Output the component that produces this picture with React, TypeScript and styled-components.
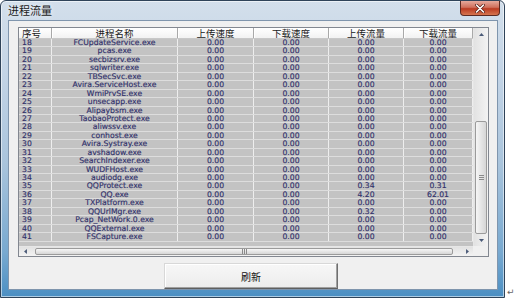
import React from 'react';
import styled, { createGlobalStyle } from 'styled-components';

const GlobalStyle = createGlobalStyle`
  html, body { margin: 0; padding: 0; background: #fff; }
  body { font-family: "DejaVu Sans", Verdana, sans-serif; }
`;

const CJK = `"Noto Sans CJK SC", "DejaVu Sans", sans-serif`;
const COLS = '33px 126px 76px 75px 75px 69px';

const Page = styled.div`
  display: flex;
  align-items: flex-end;
  width: 518px;
  height: 298px;
`;

const Window = styled.div`
  box-sizing: border-box;
  width: 505px;
  height: 298px;
  display: flex;
  flex-direction: column;
  padding: 0 6px 7px 7px;
  border: 1px solid #2f4359;
  border-radius: 6px 6px 0 0;
  background: linear-gradient(180deg, #d3dfeb 0%, #c3d4e6 25%, #a9c4dc 55%, #78a9d0 85%, #4b8fc3 100%);
  box-shadow: inset 0 0 0 1px rgba(255, 255, 255, 0.55);
`;

const TitleBar = styled.div`
  height: 19px;
  display: flex;
  align-items: flex-start;
  justify-content: space-between;
`;

const Title = styled.span`
  font-family: ${CJK};
  font-size: 11px;
  line-height: 19px;
  color: #1a1a1a;
  text-shadow: 0 0 5px rgba(255, 255, 255, 0.95);
`;

const CloseButton = styled.div`
  box-sizing: border-box;
  width: 40px;
  height: 15px;
  margin-right: -2px;
  display: flex;
  align-items: center;
  justify-content: center;
  border: 1px solid #5c2a22;
  border-top: none;
  border-radius: 0 0 4px 4px;
  background: linear-gradient(180deg, #e6a99c 0%, #d0705c 45%, #bb3b22 55%, #d5754f 100%);
`;

const Client = styled.div`
  flex: 1;
  display: flex;
  flex-direction: column;
  align-items: flex-start;
  padding: 6px 0 0 9px;
  background: #f0f0f0;
  border: 1px solid #7f95ad;
`;

const ListView = styled.div`
  box-sizing: border-box;
  width: 471px;
  height: 230px;
  display: grid;
  grid-template-columns: 454px 15px;
  grid-template-rows: 218px 10px;
  border: 1px solid #828790;
  background: #fff;
`;

const Viewport = styled.div`
  display: flex;
  flex-direction: column;
  background: #fff;
`;

const HeaderRow = styled.div`
  box-sizing: border-box;
  display: grid;
  grid-template-columns: ${COLS};
  flex: none;
  height: 11px;
  background: linear-gradient(180deg, #ffffff, #f2f2f2);
  border-bottom: 1px solid #c8c8c8;
`;

const HeaderCell = styled.div<{ $align: string }>`
  font-family: ${CJK};
  font-size: 9.5px;
  line-height: 10px;
  color: #202020;
  text-align: ${p => p.$align};
  padding-left: ${p => (p.$align === 'left' ? '3px' : '0')};
  border-right: 1px solid #a9a9a9;
  box-shadow: 1px 0 0 #fff;
  white-space: nowrap;
`;

const DataRow = styled.div`
  box-sizing: border-box;
  display: grid;
  grid-template-columns: ${COLS};
  flex: none;
  height: 8.45px;
  background: #c3c3c3;
  border-bottom: 1px solid #dddddd;
`;

const Filler = styled.div`
  flex: 1;
  background: #c3c3c3;
`;

const Cell = styled.div<{ $align: string }>`
  font-size: 7.7px;
  line-height: 7.45px;
  color: #30306a;
  -webkit-text-stroke: 0.15px #30306a;
  text-align: ${p => p.$align};
  padding-left: ${p => (p.$align === 'left' ? '3px' : '0')};
  border-right: 1px solid #eeeeee;
  white-space: nowrap;
`;

const VScroll = styled.div`
  display: flex;
  flex-direction: column;
  background: linear-gradient(90deg, #e2e2e2, #f3f3f3);
  border-left: 1px solid #e6e6e6;
`;

const HScroll = styled.div`
  display: flex;
  background: linear-gradient(180deg, #e2e2e2, #f3f3f3);
  border-top: 1px solid #e6e6e6;
`;

const ArrowButton = styled.div<{ $vertical?: boolean }>`
  flex: none;
  ${p => (p.$vertical ? 'height: 12px;' : 'width: 12px;')}
  display: flex;
  align-items: center;
  justify-content: center;
`;

const Track = styled.div<{ $vertical?: boolean }>`
  flex: 1;
  display: flex;
  flex-direction: ${p => (p.$vertical ? 'column' : 'row')};
`;

const Thumb = styled.div<{ $vertical?: boolean; $start: number; $length: number }>`
  box-sizing: border-box;
  display: flex;
  align-items: center;
  justify-content: center;
  gap: 1px;
  flex-direction: ${p => (p.$vertical ? 'column' : 'row')};
  ${p =>
    p.$vertical
      ? `margin: ${p.$start}px 1px 0; height: ${p.$length}px;`
      : `margin: 1px 0 1px ${p.$start}px; width: ${p.$length}px;`}
  border: 1px solid #9b9b9b;
  border-radius: 2px;
  background: ${p =>
    p.$vertical
      ? 'linear-gradient(90deg, #f6f6f6, #e4e4e4 55%, #d6d6d6)'
      : 'linear-gradient(180deg, #f6f6f6, #e4e4e4 55%, #d6d6d6)'};
`;

const Grip = styled.span<{ $vertical?: boolean }>`
  display: block;
  background: #8a8a8a;
  ${p => (p.$vertical ? 'width: 5px; height: 1px;' : 'width: 1px; height: 5px;')}
`;

const Corner = styled.div`
  background: #f0f0f0;
`;

const RefreshButton = styled.button`
  box-sizing: border-box;
  width: 174px;
  height: 26px;
  margin: 6px 0 0 146px;
  padding: 0;
  font-family: ${CJK};
  font-size: 10px;
  color: #111;
  background: linear-gradient(180deg, #f7f7f7, #ececec);
  border: 1px solid;
  border-color: #d8d8d8 #6f6f6f #5f5f5f #d8d8d8;
  box-shadow: inset -1px -1px 0 #a0a0a0, inset 1px 1px 0 #fff;
`;

const Mark = styled.span`
  font-size: 9px;
  line-height: 10px;
  color: #666;
  margin: 0 0 1px 2px;
`;

type Dir = 'up' | 'down' | 'left' | 'right';

const Arrow = ({ dir }: { dir: Dir }) => {
  const pts: Record<Dir, string> = {
    up: '0,4 3.5,0 7,4',
    down: '0,0 3.5,4 7,0',
    left: '4,0 0,3.5 4,7',
    right: '0,0 4,3.5 0,7',
  };
  const vert = dir === 'up' || dir === 'down';
  return (
    <svg width={vert ? 5 : 3} height={vert ? 3 : 5} viewBox={vert ? '0 0 7 4' : '0 0 4 7'}>
      <polygon points={pts[dir]} fill="#4a5a78" />
    </svg>
  );
};

const CloseIcon = () => (
  <svg width="10" height="9" viewBox="0 0 10 9">
    <path d="M1.5 1 L8.5 8 M8.5 1 L1.5 8" stroke="#5a2218" strokeWidth="3" strokeLinecap="round" />
    <path d="M1.5 1 L8.5 8 M8.5 1 L1.5 8" stroke="#ffffff" strokeWidth="1.6" strokeLinecap="round" />
  </svg>
);

const headers = ['序号', '进程名称', '上传速度', '下载速度', '上传流量', '下载流量'];

const names = [
  'FCUpdateService.exe', 'pcas.exe', 'secbizsrv.exe', 'sqlwriter.exe', 'TBSecSvc.exe',
  'Avira.ServiceHost.exe', 'WmiPrvSE.exe', 'unsecapp.exe', 'Alipaybsm.exe', 'TaobaoProtect.exe',
  'aliwssv.exe', 'conhost.exe', 'Avira.Systray.exe', 'avshadow.exe', 'SearchIndexer.exe',
  'WUDFHost.exe', 'audiodg.exe', 'QQProtect.exe', 'QQ.exe', 'TXPlatform.exe',
  'QQUrlMgr.exe', 'Pcap_NetWork.0.exe', 'QQExternal.exe', 'FSCapture.exe',
];

const traffic: Record<string, [string, string]> = {
  'QQProtect.exe': ['0.34', '0.31'],
  'QQ.exe': ['4.20', '62.01'],
  'QQUrlMgr.exe': ['0.32', '0.00'],
};

const rows = names.map((name, i) => {
  const [up, down] = traffic[name] ?? ['0.00', '0.00'];
  return [String(18 + i), name, '0.00', '0.00', up, down];
});

const align = (i: number) => (i === 0 ? 'left' : 'center');

export default function App() {
  return (
    <>
      <GlobalStyle />
      <Page>
        <Window>
          <TitleBar>
            <Title>进程流量</Title>
            <CloseButton>
              <CloseIcon />
            </CloseButton>
          </TitleBar>
          <Client>
            <ListView>
              <Viewport>
                <HeaderRow>
                  {headers.map((h, i) => (
                    <HeaderCell key={h} $align={align(i)}>{h}</HeaderCell>
                  ))}
                </HeaderRow>
                {rows.map(r => (
                  <DataRow key={r[0]}>
                    {r.map((v, i) => (
                      <Cell key={i} $align={align(i)}>{v}</Cell>
                    ))}
                  </DataRow>
                ))}
                <Filler />
              </Viewport>
              <VScroll>
                <ArrowButton $vertical><Arrow dir="up" /></ArrowButton>
                <Track $vertical>
                  <Thumb $vertical $start={81} $length={113}>
                    <Grip $vertical /><Grip $vertical /><Grip $vertical />
                  </Thumb>
                </Track>
                <ArrowButton $vertical><Arrow dir="down" /></ArrowButton>
              </VScroll>
              <HScroll>
                <ArrowButton><Arrow dir="left" /></ArrowButton>
                <Track>
                  <Thumb $start={4} $length={418}>
                    <Grip /><Grip /><Grip />
                  </Thumb>
                </Track>
                <ArrowButton><Arrow dir="right" /></ArrowButton>
              </HScroll>
              <Corner />
            </ListView>
            <RefreshButton>刷新</RefreshButton>
          </Client>
        </Window>
        <Mark>↵</Mark>
      </Page>
    </>
  );
}
